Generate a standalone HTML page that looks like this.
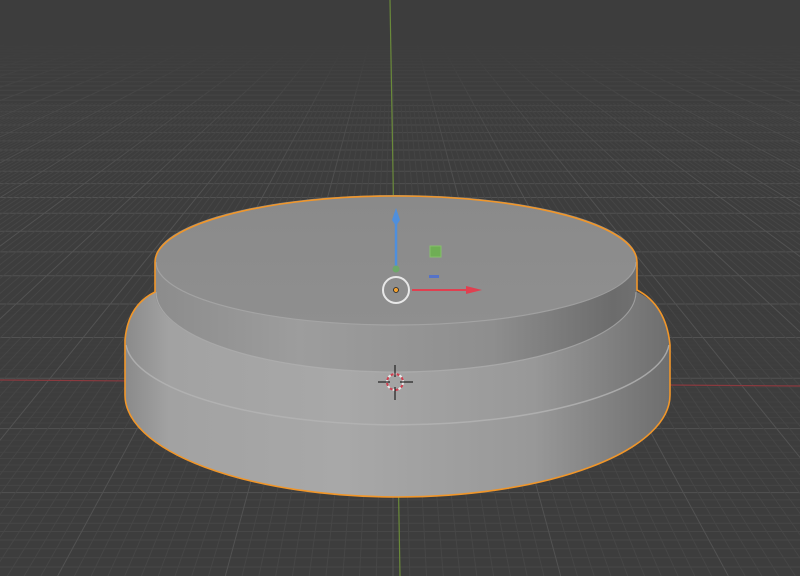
<!DOCTYPE html>
<html><head><meta charset="utf-8"><style>
html,body{margin:0;padding:0;background:#3d3d3d;overflow:hidden}
svg{display:block}
</style></head><body>
<svg id="s" width="800" height="576" viewBox="0 0 800 576" xmlns="http://www.w3.org/2000/svg">
<defs>
<linearGradient id="fade" x1="0" y1="0" x2="0" y2="1">
<stop offset="0" stop-color="#3d3d3d" stop-opacity="1"/>
<stop offset="0.09" stop-color="#3d3d3d" stop-opacity="0.95"/>
<stop offset="0.2" stop-color="#3d3d3d" stop-opacity="0.4"/>
<stop offset="0.35" stop-color="#3d3d3d" stop-opacity="0"/>
</linearGradient>
<linearGradient id="upper" x1="0" y1="0" x2="1" y2="0">
<stop offset="0" stop-color="#8c8c8c"/>
<stop offset="0.3" stop-color="#9d9d9d"/>
<stop offset="0.7" stop-color="#8e8e8e"/>
<stop offset="0.95" stop-color="#6c6c6c"/>
<stop offset="1" stop-color="#707070"/>
</linearGradient>
<linearGradient id="lower" x1="0" y1="0" x2="1" y2="0">
<stop offset="0" stop-color="#8a8a8a"/>
<stop offset="0.08" stop-color="#a2a2a2"/>
<stop offset="0.4" stop-color="#a8a8a8"/>
<stop offset="0.75" stop-color="#989898"/>
<stop offset="0.95" stop-color="#767676"/>
<stop offset="1" stop-color="#6e6e6e"/>
</linearGradient>
<linearGradient id="top" x1="0" y1="0" x2="0" y2="1">
<stop offset="0" stop-color="#8a8a8a"/>
<stop offset="1" stop-color="#8f8f8f"/>
</linearGradient>
</defs>
<g id="grid" stroke-width="1"></g>
<rect x="0" y="0" width="800" height="576" fill="url(#fade)"/>
<line x1="0" y1="380" x2="800" y2="386" stroke="#8a3a3f" stroke-width="1.2"/>
<line x1="390" y1="0" x2="400" y2="576" stroke="#6a8a3a" stroke-width="1.2"/>
<path d="M155,292 Q128,305 125,340 L125,395 A272.5,102 0 0 0 670,395 L670,345 Q666,305 637,292 Z" fill="url(#lower)"/>
<path d="M126,345 A272,85 0 0 0 669,345" fill="none" stroke="#b4b4b4" stroke-width="1.5" opacity="0.8"/>
<path d="M155,260 L155,292 A241,80 0 0 0 637,292 L637,260 Z" fill="url(#upper)"/>
<path d="M156,292 A240,80 0 0 0 636,292" fill="none" stroke="#b0b0b0" stroke-width="1.2" opacity="0.7"/>
<ellipse cx="396" cy="260" rx="241" ry="65" fill="url(#top)"/>
<path d="M156,262 A240,63 0 0 0 636,262" fill="none" stroke="#a8a8a8" stroke-width="1.2" opacity="0.8"/>
<path d="M155,262 A241,66 0 0 1 637,262 L637,290 Q666,305 670,345 L670,395 A272.5,102 0 0 1 125,395 L125,340 Q128,305 155,292 Z" fill="none" stroke="#f0962a" stroke-width="1.6"/>
<line x1="396" y1="268" x2="396" y2="222" stroke="#4f8fdc" stroke-width="2.5"/>
<polygon points="396,208 400,220 396,226 392,220" fill="#4f8fdc"/>
<circle cx="396" cy="269" r="3.5" fill="#6fa86a"/>
<rect x="430" y="246" width="11" height="11" fill="#6fae55" stroke="#86c06c" stroke-width="1"/>
<rect x="429" y="275" width="10" height="3" fill="#5673c8"/>
<line x1="412" y1="290" x2="470" y2="290" stroke="#e04050" stroke-width="2"/>
<polygon points="466,286 482,290 466,294" fill="#e04050"/>
<circle cx="396" cy="290" r="13" fill="none" stroke="#e8e8e8" stroke-width="2"/>
<circle cx="396" cy="290" r="2.5" fill="#f0a030" stroke="#222" stroke-width="0.8"/>
<circle cx="395" cy="382" r="8" fill="none" stroke="#e9e9e9" stroke-width="2" stroke-dasharray="3 3"/>
<circle cx="395" cy="382" r="8" fill="none" stroke="#d04050" stroke-width="2" stroke-dasharray="3 3" stroke-dashoffset="3"/>
<g stroke="#222" stroke-width="1.2">
<line x1="378" y1="382" x2="390" y2="382"/><line x1="400" y1="382" x2="413" y2="382"/>
<line x1="395" y1="365" x2="395" y2="377"/><line x1="395" y1="387" x2="395" y2="400"/>
</g>
</svg>
<script>
(function(){
var g=document.getElementById('grid');var ns='http://www.w3.org/2000/svg';
var h=-45,K=3978,cx=393,c=0.27,z0=7.4,ytop=45;
function L(x1,y1,x2,y2,col,op){var l=document.createElementNS(ns,'line');l.setAttribute('x1',x1);l.setAttribute('y1',y1);l.setAttribute('x2',x2);l.setAttribute('y2',y2);l.setAttribute('stroke',col);if(op<1)l.setAttribute('stroke-opacity',op);g.appendChild(l);}
// horizontal
for(var i=-30;i<=400;i++){var z=z0+i/10;if(z<=0)continue;var y=h+K/z;if(y>576)continue;if(y<ytop)break;
 var major=(i%10===0);
 if(major){L(0,y,800,y,'#525252',1);}
 else{var sp=(y-h)*(y-h)/K/10;var op=Math.min(1,Math.max(0,(sp-3)/5));if(op>0)L(0,y,800,y,'#474747',op);}
}
// vertical (radial)
for(var j=-300;j<=300;j++){var X=j/10;var major=(j%10===0);
 var x1=cx+X*c*(ytop-h),x2=cx+X*c*(576-h);
 if(major){L(x1,ytop,x2,576,'#525252',1);}
 else{
  // minor: draw only lower portion where spacing is big enough
  var ys=Math.max(ytop,h+4/(c/10)*1);// spacing c/10*(y-h) >=4
  ys=Math.max(ytop,h+4/(c/10));
  var xs=cx+X*c*(ys-h);L(xs,ys,x2,576,'#474747',0.9);
 }
}
})();
</script>
</body></html>
